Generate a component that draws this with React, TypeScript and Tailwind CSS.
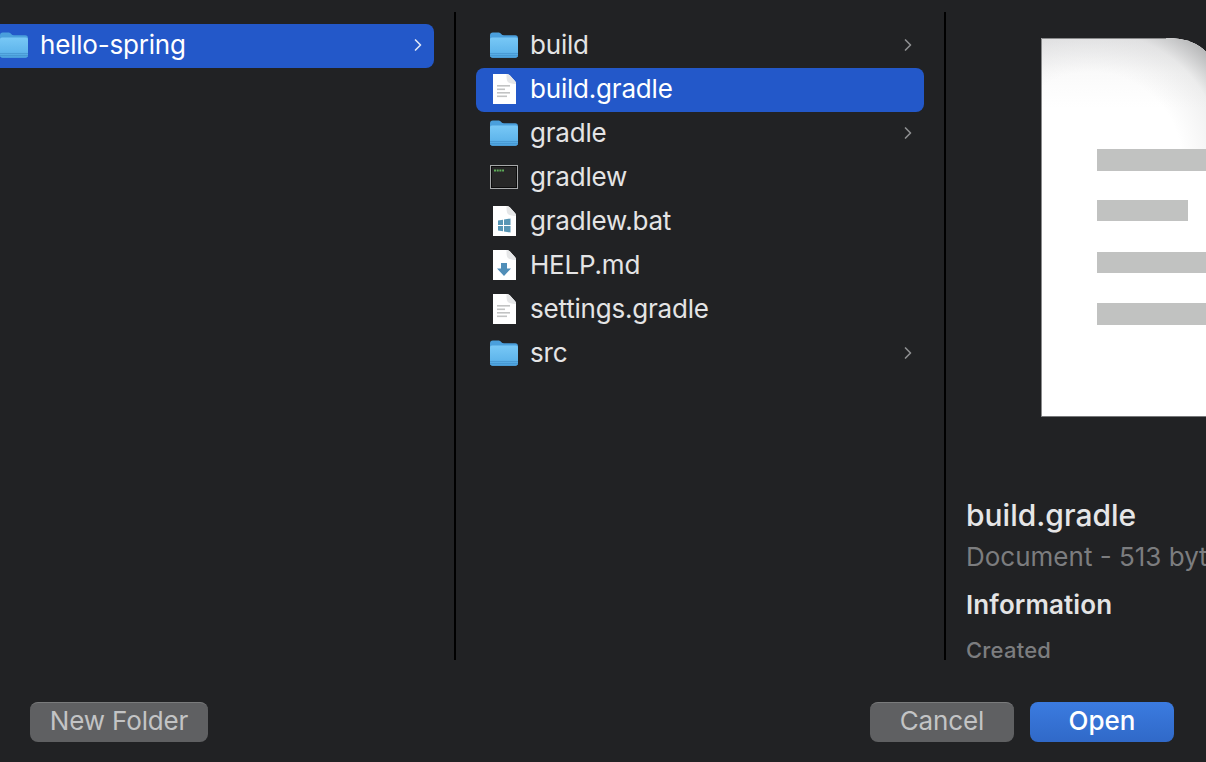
import { ChevronRight } from "lucide-react";

type Kind = "folder" | "doc" | "term" | "bat" | "md";

const files: { name: string; kind: Kind; more?: boolean; selected?: boolean }[] = [
  { name: "build", kind: "folder", more: true },
  { name: "build.gradle", kind: "doc", selected: true },
  { name: "gradle", kind: "folder", more: true },
  { name: "gradlew", kind: "term" },
  { name: "gradlew.bat", kind: "bat" },
  { name: "HELP.md", kind: "md" },
  { name: "settings.gradle", kind: "doc" },
  { name: "src", kind: "folder", more: true },
];

function FolderIcon({ id }: { id: string }) {
  return (
    <svg width="28" height="26" viewBox="0 0 28 26" className="shrink-0">
      <defs>
        <linearGradient id={id} x1="0" y1="0" x2="0" y2="1">
          <stop offset="0" stopColor="#78c8f6" />
          <stop offset="0.7" stopColor="#60b6ec" />
          <stop offset="1" stopColor="#4a9fdb" />
        </linearGradient>
      </defs>
      <path d="M0 3.500C0 1.600 1 .5 2.800.5h5.400c1.400 0 2 .5 3 1.500.8.8 1.400 1.200 2.600 1.200h11.400C27 3.200 28 4.300 28 6v17c0 1.800-1 2.800-2.800 2.800H2.800C1 25.800 0 24.800 0 23Z" fill="#4a9fdc" />
      <path d="M0 7.500C0 6.300.8 5.500 2 5.500h24c1.200 0 2 .8 2 2V23c0 1.800-1 2.800-2.800 2.800H2.800C1 25.800 0 24.800 0 23Z" fill={`url(#${id})`} />
      <path d="M0 21.500h28M0 23.500h28" stroke="#4492cd" strokeWidth="0.7" />
    </svg>
  );
}

function PageIcon({ kind }: { kind: Kind }) {
  return (
    <svg width="28" height="30" viewBox="0 0 28 30" className="shrink-0">
      <path d="M3 0h13.500c1.500 0 2.500.5 3.500 1.500l4.500 5c1 1 1.500 2 1.500 3.500v20H3Z" fill="#ffffff" />
      <path d="M16.500 0c1.500 0 2.500.5 3.500 1.500l4.500 5c1 1 1.500 2 1.500 3.500-3 0-7-.5-8.500-2.500C16.500 6 16.500 3 16.500 0Z" fill="#e6e7e8" />
      {kind === "doc" && (
        <g fill="#c2c3c3">
          <rect x="7" y="11" width="13" height="1.600" />
          <rect x="7" y="14.500" width="8" height="1.600" />
          <rect x="7" y="18" width="13" height="1.600" />
          <rect x="7" y="21.500" width="10" height="1.600" />
        </g>
      )}
      {kind === "bat" && (
        <path d="M8 14.500l5-.8v5.300H8Zm6-1 6.500-1v6.500H14Zm-6 6.500h5v5.300l-5-.8Zm6 0h6.500v6.500l-6.500-1Z" fill="#5796b5" />
      )}
      {kind === "md" && (
        <path d="M11 13h6v5.500h4L14 26l-7-7.500h4Z" fill="#508eb8" />
      )}
    </svg>
  );
}

function TerminalIcon() {
  return (
    <svg width="28" height="24" viewBox="0 0 28 24" className="shrink-0">
      <rect x="0.500" y="0.500" width="27" height="23" fill="#0c0c0c" stroke="#a6a8a9" strokeWidth="1" />
      <rect x="2" y="2" width="24" height="20" fill="#272727" />
      <path d="M4 5.500h10" stroke="#5fae5a" strokeWidth="2" strokeDasharray="2 0.700" />
    </svg>
  );
}

function FileIcon({ kind, id }: { kind: Kind; id: string }) {
  if (kind === "folder") return <FolderIcon id={id} />;
  if (kind === "term") return <TerminalIcon />;
  return <PageIcon kind={kind} />;
}

function DocPreview() {
  return (
    <svg width="165" height="379" viewBox="0 0 165 379" className="shrink-0">
      <defs>
        <linearGradient id="preview-top" x1="0" y1="0" x2="0" y2="1">
          <stop offset="0" stopColor="#ececed" />
          <stop offset="0.500" stopColor="#fafafa" />
          <stop offset="1" stopColor="#ffffff" />
        </linearGradient>
        <radialGradient id="preview-corner" gradientUnits="userSpaceOnUse" cx="50" cy="125" r="165">
          <stop offset="0.550" stopColor="#a8a9aa" stopOpacity="0" />
          <stop offset="0.800" stopColor="#a8a9aa" stopOpacity="0.180" />
          <stop offset="1" stopColor="#a8a9aa" stopOpacity="0.900" />
        </radialGradient>
        <clipPath id="preview-shape">
          <path d="M0 0H125C145 0 158 6 165 14V379H0Z" />
        </clipPath>
      </defs>
      <g clipPath="url(#preview-shape)">
        <rect width="165" height="379" fill="#ffffff" />
        <rect width="165" height="70" fill="url(#preview-top)" />
        <rect width="165" height="125" fill="url(#preview-corner)" />
      </g>
      <path d="M.5 379V.5H125" fill="none" stroke="#8a8b8c" strokeWidth="1" />
      <path d="M0 378.500H165" stroke="#77787a" strokeWidth="1" />
      <g fill="#c1c2c1">
        <rect x="56" y="111" width="109" height="22" />
        <rect x="56" y="162" width="91" height="21" />
        <rect x="56" y="214" width="109" height="21" />
        <rect x="56" y="265" width="109" height="22" />
      </g>
    </svg>
  );
}

export default function App() {
  return (
    <div
      className="flex h-[762px] w-[1206px] flex-col overflow-hidden bg-[#212224] text-[26px] text-[#e4e4e5]"
      style={{ fontFamily: "Inter, 'Noto Sans', sans-serif" }}
    >
      <div className="mt-3 flex h-[648px] shrink-0">
        <div className="w-[454px] shrink-0 pr-5 pt-3">
          <div className="flex h-11 items-center rounded-r-lg bg-[#2358c9] pb-0.5 pr-1.5 text-white">
            <FolderIcon id="folder-root" />
            <span className="ml-3 leading-none tracking-[-0.2px]">hello-spring</span>
            <ChevronRight className="ml-auto h-5 w-5 text-[#dfe7f7]" strokeWidth={2} />
          </div>
        </div>
        <div className="h-full w-0.5 shrink-0 bg-black" />
        <div className="w-[488px] shrink-0 px-5 pt-3">
          {files.map((file) => (
            <div
              key={file.name}
              className={`flex h-11 items-center rounded-lg pb-0.5 pl-3.5 pr-1.5 ${file.selected ? "bg-[#2358c9] text-white" : ""}`}
            >
              <span className="flex w-7 shrink-0 justify-center">
                <FileIcon kind={file.kind} id={`folder-${file.name}`} />
              </span>
              <span className="ml-3 leading-none tracking-[-0.2px]">{file.name}</span>
              {file.more && <ChevronRight className="ml-auto h-5 w-5 text-[#8e8f91]" strokeWidth={2} />}
            </div>
          ))}
        </div>
        <div className="h-full w-0.5 shrink-0 bg-black" />
        <div className="min-w-0 flex-1 overflow-hidden pl-5 whitespace-nowrap">
          <div className="ml-[75px] mt-[26px] flex">
            <DocPreview />
          </div>
          <div className="mt-[80px] text-[30px] leading-9 font-medium text-[#e6e6e7]">build.gradle</div>
          <div className="mt-2 text-[26px] leading-8 text-[#7c7d7f]">Document - 513 bytes</div>
          <div className="mt-4 text-[26px] leading-8 font-semibold tracking-[0.1px] text-[#e4e4e5]">Information</div>
          <div className="mt-[15px] text-[22px] leading-7 font-medium tracking-[0.2px] text-[#7c7d7f]">Created</div>
        </div>
      </div>
      <div className="flex flex-1 items-start px-8 pt-[42px]">
        <button className="ml-[-2px] flex h-10 w-[178px] items-center justify-center rounded-lg border-t border-[#7a7b7c] bg-[#5f6062] pb-1 text-[26px] leading-none tracking-[-0.15px] text-[#c3c4c5]">
          New Folder
        </button>
        <button className="ml-auto flex h-10 w-[144px] items-center justify-center rounded-lg border-t border-[#7a7b7c] bg-[#5f6062] pb-1 text-[26px] leading-none tracking-[-0.1px] text-[#c3c4c5]">
          Cancel
        </button>
        <button className="ml-4 flex h-10 w-[144px] items-center justify-center rounded-lg bg-gradient-to-b from-[#3b7be0] to-[#3069c8] pb-0.5 text-[26px] leading-none font-medium text-white">
          Open
        </button>
      </div>
    </div>
  );
}
